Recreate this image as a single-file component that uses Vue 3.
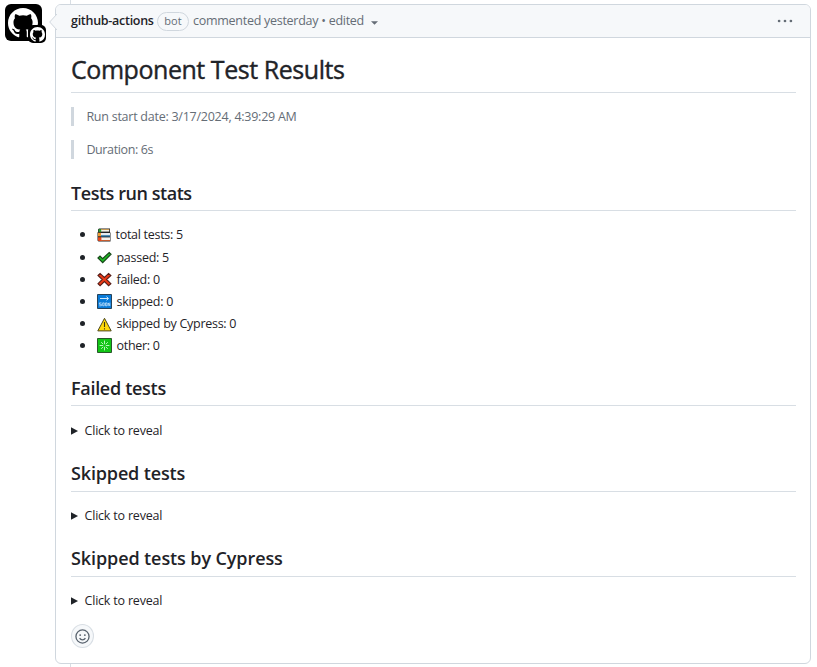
<script setup>
const stats = [
  { icon: 'books', label: 'total tests', value: 5 },
  { icon: 'check', label: 'passed', value: 5 },
  { icon: 'cross', label: 'failed', value: 0 },
  { icon: 'soon', label: 'skipped', value: 0 },
  { icon: 'warning', label: 'skipped by Cypress', value: 0 },
  { icon: 'star', label: 'other', value: 0 },
]
const groups = [
  { title: 'Failed tests', key: 'failed' },
  { title: 'Skipped tests', key: 'skipped' },
  { title: 'Skipped tests by Cypress', key: 'cypress' },
]
const mark =
  'M8 0C3.58 0 0 3.58 0 8c0 3.54 2.29 6.53 5.47 7.59.4.07.55-.17.55-.38 0-.19-.01-.82-.01-1.49-2.01.37-2.53-.49-2.69-.94-.09-.23-.48-.94-.82-1.13-.28-.15-.68-.52-.01-.53.63-.01 1.08.58 1.23.82.72 1.21 1.87.87 2.33.66.07-.52.28-.87.51-1.07-1.78-.2-3.64-.89-3.64-3.95 0-.87.31-1.59.82-2.15-.08-.2-.36-1.02.08-2.12 0 0 .67-.21 2.2.82.64-.18 1.32-.27 2-.27.68 0 1.36.09 2 .27 1.53-1.04 2.2-.82 2.2-.82.44 1.1.16 1.92.08 2.12.51.56.82 1.27.82 2.15 0 3.07-1.87 3.75-3.65 3.95.29.25.54.73.54 1.48 0 1.07-.01 1.93-.01 2.2 0 .21.15.46.55.38A8.013 8.013 0 0 0 16 8c0-4.42-3.58-8-8-8z'
</script>

<template>
  <main class="timeline">
    <div class="avatar">
      <svg class="mark" viewBox="0 0 16 16"><path :d="mark" /></svg>
      <span class="badge"><svg viewBox="0 0 16 16"><path :d="mark" /></svg></span>
    </div>
    <div class="item">
      <article class="card">
        <svg class="caret" viewBox="0 0 8 16"><path d="M8 0 0.7 8 8 16" /></svg>
        <header class="head">
          <strong class="author">github-actions</strong>
          <span class="bot">bot</span>
          <span class="meta">commented yesterday • edited</span>
          <svg class="drop" viewBox="0 0 8 4"><path d="M0 0h8L4 4z" /></svg>
          <svg class="kebab" viewBox="0 0 16 4"><circle cx="2.1" cy="2" r="1.35" /><circle cx="8" cy="2" r="1.35" /><circle cx="13.9" cy="2" r="1.35" /></svg>
        </header>
        <div class="body">
          <h1><span>Component Test Results</span></h1>
          <blockquote class="date">Run start date: 3/17/2024, 4:39:29 AM</blockquote>
          <blockquote class="duration">Duration: 6s</blockquote>
          <h2 class="h-stats">Tests run stats</h2>
          <ul>
            <li v-for="s in stats" :key="s.icon">
              <svg v-if="s.icon === 'books'" class="emoji books" viewBox="0 0 14 14">
                <path d="M2 .5h11v4h.5v9h-12l-1-1V4.6L1 4V1.5z" fill="#222" />
                <path d="M4 1.6h8.2v2H4z" fill="#f4f1e6" /><path d="M1.6 1.2h2.6v2.7H1.6z" fill="#2aa13a" /><path d="M4 1h8.2v.8H4z" fill="#d9a04a" />
                <path d="M4 5h9v2.6H4z" fill="#e7edf2" /><path d="M1 4.8h3v3.5H1z" fill="#ed9a32" /><path d="M4 7.4h9v1.1H4z" fill="#2587c8" />
                <path d="M4 9.4h9v2.7H4z" fill="#f5f1eb" /><path d="M1 9.2h3.4v3.7H1.6L1 12.3z" fill="#e9471c" /><path d="M4 12.1h9v.8H4z" fill="#e9662f" />
              </svg>
              <svg v-else-if="s.icon === 'check'" class="emoji" viewBox="0 0 15 14">
                <path d="M1 7.5 3 5.6 5.6 8.2 12.2 2 14 3.7 5.7 12.2z" fill="#1fbd25" stroke="#174619" stroke-width="1.2" />
              </svg>
              <svg v-else-if="s.icon === 'cross'" class="emoji" viewBox="0 0 15 14">
                <path d="M1 2.9 3.1.9 7.4 5l4.2-4.1 2.3 2L9.6 7l4.3 4.2-2.3 2L7.4 9.1l-4.3 4.1-2.1-2L5.2 7z" fill="#ed3a16" stroke="#561e18" stroke-width="1.1" />
              </svg>
              <svg v-else-if="s.icon === 'soon'" class="emoji" viewBox="0 0 15 15">
                <path d="M.5.5h14v14H.5z" fill="#087bd9" stroke="#25435b" />
                <path d="M3 4.5h8M9.5 2.7l2 1.8-2 1.8" fill="none" stroke="#e4f4ff" stroke-width=".9" />
                <path d="M4.5 8.9H2.4v1.4h2v1.5H2.2M5.7 8.9h1.5v2.9H5.7zM8.5 8.9H10v2.9H8.5zM11.2 12.1V8.9l1.6 2.9V8.6" fill="none" stroke="#c5e3fb" stroke-width=".8" />
              </svg>
              <svg v-else-if="s.icon === 'warning'" class="emoji warn" viewBox="0 0 15 14">
                <path d="M7.5.8 14.2 13.4H.8z" fill="#ffd90a" stroke="#49451f" />
                <path d="M7.5 4.5v5M7.5 10.7v1.3" stroke="#3f3b11" stroke-width="1.1" />
              </svg>
              <svg v-else class="emoji" viewBox="0 0 15 15">
                <path d="M.5.5h14v14H.5z" fill="#12c516" stroke="#28582a" />
                <path d="M7.5 2.6v3.6m0 2.6v3.6M2.6 7.5h3.6m2.6 0h3.6M4.2 4.2l2 2m2.6 2.6 2 2M10.8 4.2l-2 2M6.2 8.8l-2 2" stroke="#c9f9cb" stroke-width=".9" />
              </svg>
              <span>{{ s.label }}: {{ s.value }}</span>
            </li>
          </ul>
          <section v-for="g in groups" :key="g.key" :class="g.key">
            <h2>{{ g.title }}</h2>
            <details>
              <summary><svg viewBox="0 0 8 8"><path d="M0 0 7.5 4 0 8z" /></svg><span>Click to reveal</span></summary>
            </details>
          </section>
          <button class="react" aria-label="Add reaction">
            <svg viewBox="0 0 16 16"><circle cx="8" cy="8" r="7" /><path d="M4.9 9.7c1.4 2.4 4.8 2.4 6.2 0" /><circle class="eye" cx="5.5" cy="6.5" r="1" /><circle class="eye" cx="10.5" cy="6.5" r="1" /></svg>
          </button>
        </div>
      </article>
    </div>
  </main>
</template>

<style>
body { margin: 0; background: #fff; }
</style>
<style scoped>
* { box-sizing: border-box; }
.timeline { display: flex; width: 817px; height: 667px; overflow: hidden; font-family: "Open Sans", "Noto Sans", sans-serif; font-size: 12.5px; color: #1f2328; }
.timeline svg { display: block; flex: none; }
.avatar { position: relative; width: 37px; height: 37px; margin: 4px 13px 0 5px; border-radius: 6px; background: #000; padding: 4px 3px; flex: none; }
.mark { width: 30px; height: 30px; fill: #fff; }
.badge { position: absolute; left: 23px; top: 21px; width: 18px; height: 18px; padding: 1.5px; border-radius: 5px; background: #000; }
.badge svg { width: 15px; height: 15px; fill: #fff; }
.item { width: 756px; height: 667px; padding-top: 4px; background: linear-gradient(#d8dee4, #d8dee4) 15px 0 / 1px 100% no-repeat; }
.card { position: relative; height: 660px; border: 1px solid #d0d7de; border-radius: 6px; background: #fff; }
.caret { position: absolute; left: -7px; top: 9px; width: 8px; height: 16px; fill: #f6f8fa; stroke: #d0d7de; stroke-width: 1; }
.head { display: flex; align-items: center; height: 33px; padding: 0 17px 0 15px; border-bottom: 1px solid #d0d7de; border-radius: 5px 5px 0 0; background: #f6f8fa; color: #656d76; white-space: nowrap; }
.author { width: 83px; padding-bottom: 2px; font-weight: 600; color: #1f2328; letter-spacing: -.28px; }
.bot { display: flex; align-items: center; justify-content: center; width: 32px; height: 19px; margin: 0 4px 0 3px; padding-bottom: 1px; border: 1px solid #d0d7de; border-radius: 10px; font-size: 11px; font-weight: 500; }
.meta { width: 171px; padding-bottom: 2px; letter-spacing: -.27px; }
.drop { width: 7px; height: 4px; margin: 4px 0 0 7px; fill: #656d76; }
.kebab { width: 16px; height: 4px; margin-left: auto; fill: #656d76; }
.body { padding: 0 14px 0 15px; }
h1, h2, blockquote, ul { margin: 0; }
h1 { height: 55px; padding-top: 14px; border-bottom: 1px solid #d8dee4; font-size: 25px; line-height: 34px; font-weight: 400; letter-spacing: -.45px; -webkit-text-stroke: .4px #1f2328; white-space: nowrap; }
h2 { height: 51px; padding-top: 21px; border-bottom: 1px solid #d8dee4; font-size: 18px; line-height: 24px; font-weight: 600; letter-spacing: -.1px; white-space: nowrap; }
blockquote { height: 19px; margin-top: 14px; padding-left: 12.4px; border-left: 3px solid #d0d7de; line-height: 19px; color: #656d76; letter-spacing: -.25px; }
.duration { letter-spacing: -.38px; }
.h-stats { height: 52px; padding-top: 22px; letter-spacing: -.45px; }
ul { padding: 12.5px 0 0; list-style: none; height: 149px; }
li { display: flex; align-items: center; height: 22px; padding-left: 9px; white-space: nowrap; letter-spacing: -.28px; }
li:first-child { height: 22.6px; margin-bottom: .4px; }
li::before { content: ""; width: 5px; height: 5px; margin-right: 12px; border-radius: 50%; background: #1f2328; }
.emoji { width: 15px; height: 15px; margin-right: 4.5px; }
.books { width: 14px; height: 14px; }
.warn { margin-top: 3px; }
section { height: 85px; }
section h2 { height: 46px; padding-top: 16px; }
.failed h2 { letter-spacing: -.3px; }
.skipped h2, .cypress h2 { height: 47px; }
.skipped h2 { letter-spacing: -.15px; }
summary { display: flex; align-items: center; height: 19px; margin-top: 15px; list-style: none; letter-spacing: -.2px; }
.skipped summary, .cypress summary { margin-top: 14px; }
summary svg { width: 7.5px; height: 8px; margin-right: 6px; fill: #1f2328; }
.react { display: flex; align-items: center; justify-content: center; width: 23px; height: 24px; margin: 9px 0 0; padding: 0; border: 1px solid #d8dee4; border-radius: 50%; background: #f6f8fa; }
.react svg { width: 15px; height: 15px; fill: none; stroke: #59636e; stroke-width: 1.4; }
.react .eye { fill: #59636e; stroke: none; }
</style>
